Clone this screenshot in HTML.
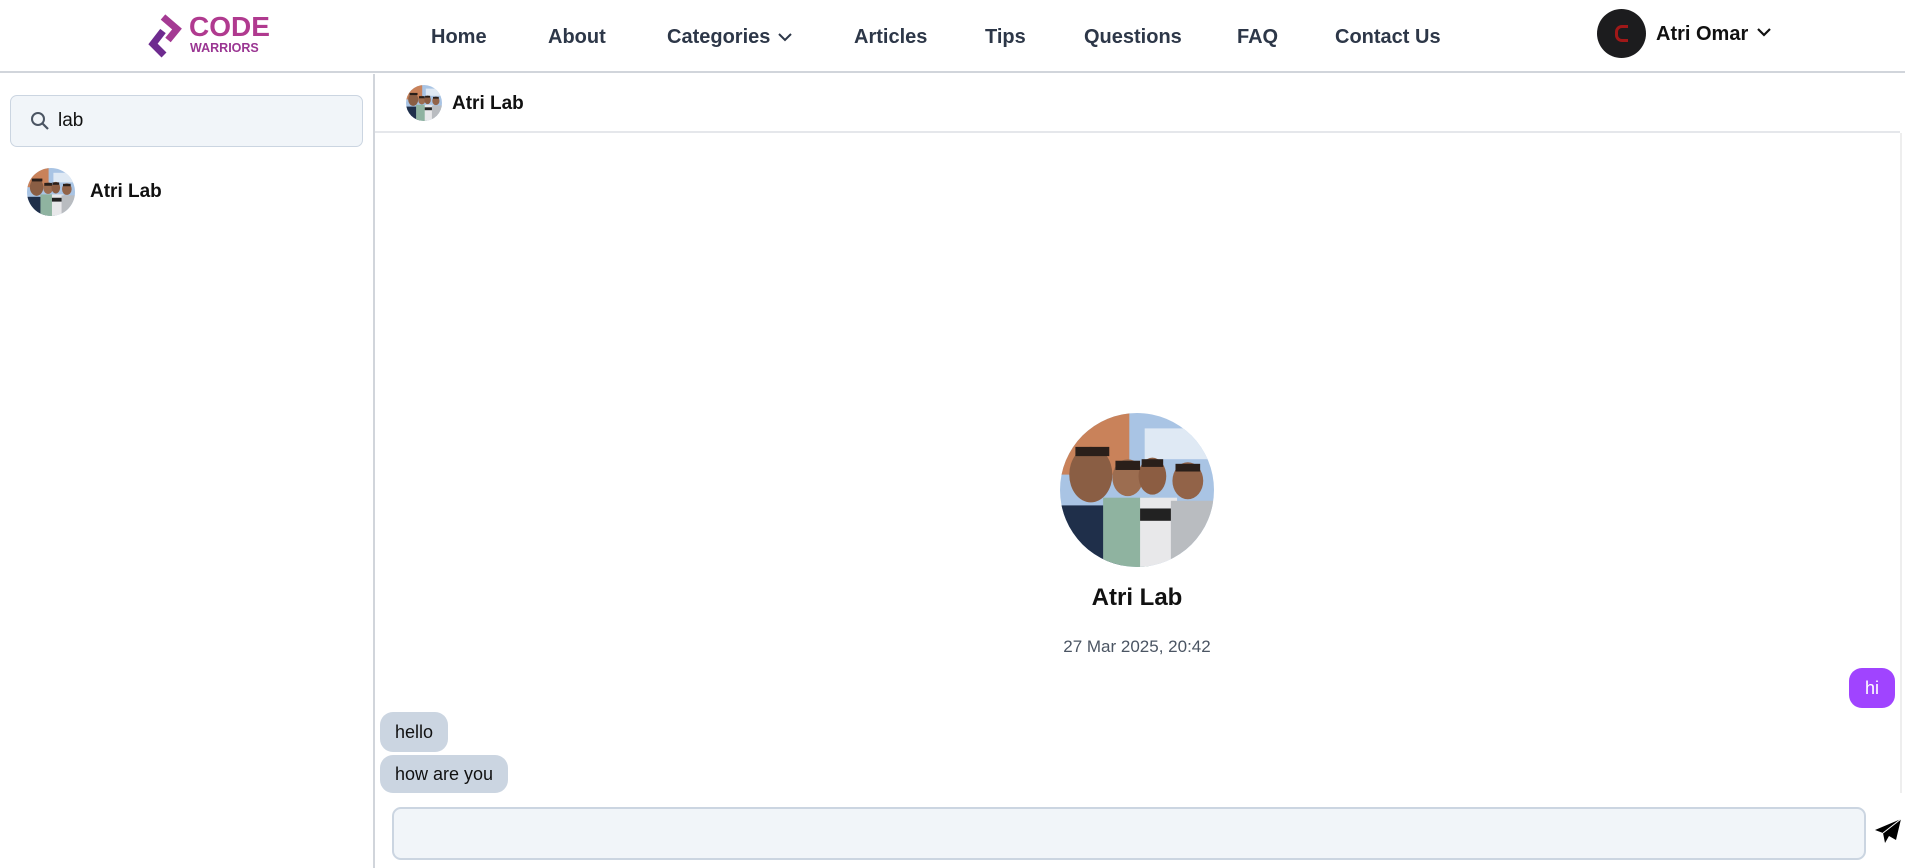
<!DOCTYPE html>
<html><head><meta charset="utf-8"><style>
*{box-sizing:border-box;margin:0;padding:0}
body{width:1905px;height:868px;overflow:hidden;background:#fff;font-family:"Liberation Sans",sans-serif;position:relative;color:#111}
.abs{position:absolute}
.nav{font-size:20px;font-weight:bold;color:#2d3748;top:26px}
.av{position:absolute;border-radius:50%;overflow:hidden}
.av svg{display:block;width:100%;height:100%}
.bub{position:absolute;border-radius:13px;font-size:18px;padding:0 15px;line-height:40px}
</style></head><body>
<div class="abs" style="left:0;top:0;width:1905px;height:73px;border-bottom:2px solid #d1d5db"></div>
<svg class="abs" style="left:146px;top:13px" width="42" height="46" viewBox="0 0 42 46">
<path d="M17 4 L31 16 L22 27" fill="none" stroke="#a43a93" stroke-width="7" stroke-linejoin="miter"/>
<path d="M17 18 L7 31 L18 42" fill="none" stroke="#6e2b8f" stroke-width="7" stroke-linejoin="miter"/>
</svg>
<div class="abs" style="left:189px;top:12px;font-size:28px;font-weight:bold;color:#b03a8f;line-height:30px">CODE</div>
<div class="abs" style="left:190px;top:41px;font-size:12.5px;font-weight:bold;color:#9a3592;line-height:14px">WARRIORS</div>
<div class="abs nav" style="left:431px">Home</div>
<div class="abs nav" style="left:548px">About</div>
<div class="abs nav" style="left:667px">Categories</div>
<svg class="abs" style="left:777px;top:32px" width="16" height="10" viewBox="0 0 16 10"><path d="M2 2 L8 8 L14 2" fill="none" stroke="#2d3748" stroke-width="2"/></svg>
<div class="abs nav" style="left:854px">Articles</div>
<div class="abs nav" style="left:985px">Tips</div>
<div class="abs nav" style="left:1084px">Questions</div>
<div class="abs nav" style="left:1237px">FAQ</div>
<div class="abs nav" style="left:1335px">Contact Us</div>
<div class="abs" style="left:1597px;top:9px;width:49px;height:49px;border-radius:50%;background:#1c1c1e"></div>
<div class="abs" style="left:1615px;top:25px;width:13px;height:17px;border:3px solid #a01818;border-right:none;border-radius:7px 0 0 7px"></div>
<div class="abs" style="left:1656px;top:23px;font-size:20px;font-weight:bold;color:#111">Atri Omar</div>
<svg class="abs" style="left:1756px;top:27px" width="16" height="10" viewBox="0 0 16 10"><path d="M2 2 L8 8 L14 2" fill="none" stroke="#111" stroke-width="2.2"/></svg>

<div class="abs" style="left:373px;top:74px;width:2px;height:794px;background:#d1d5db"></div>
<div class="abs" style="left:10px;top:95px;width:353px;height:52px;background:#f1f5f9;border:1px solid #cbd5e1;border-radius:7px"></div>
<svg class="abs" style="left:30px;top:111px" width="20" height="20" viewBox="0 0 20 20"><circle cx="8" cy="8" r="6" fill="none" stroke="#4b5563" stroke-width="2"/><path d="M12.5 12.5 L18 18" stroke="#4b5563" stroke-width="2.2"/></svg>
<div class="abs" style="left:58px;top:110px;font-size:19px;color:#111">lab</div>

<div class="av" style="left:27px;top:168px;width:48px;height:48px"><svg viewBox="0 0 100 100"><rect width="100" height="100" fill="#a9c4e4"/><rect x="0" y="0" width="45" height="40" fill="#c9825a"/><rect x="55" y="10" width="45" height="20" fill="#dfe9f4"/><rect x="-5" y="60" width="45" height="45" fill="#1f2f4a"/><rect x="28" y="55" width="30" height="50" fill="#8fb3a0"/><rect x="52" y="55" width="24" height="50" fill="#e8e8ea"/><rect x="52" y="62" width="24" height="8" fill="#222"/><rect x="72" y="57" width="30" height="50" fill="#b9bcc0"/><ellipse cx="20" cy="40" rx="14" ry="18" fill="#8a5e44"/><ellipse cx="44" cy="42" rx="10" ry="12" fill="#9c6d50"/><ellipse cx="60" cy="41" rx="9" ry="12" fill="#8c5d42"/><ellipse cx="83" cy="44" rx="10" ry="12" fill="#926348"/><rect x="10" y="22" width="22" height="6" fill="#2a1f1a"/><rect x="36" y="31" width="16" height="6" fill="#2a1f1a"/><rect x="53" y="30" width="14" height="5" fill="#2a1f1a"/><rect x="75" y="33" width="16" height="5" fill="#2a1f1a"/></svg></div>
<div class="abs" style="left:90px;top:181px;font-size:19px;font-weight:bold">Atri Lab</div>

<div class="abs" style="left:375px;top:131px;width:1525px;height:2px;background:#e5e7eb"></div>
<div class="av" style="left:406px;top:85px;width:36px;height:36px"><svg viewBox="0 0 100 100"><rect width="100" height="100" fill="#a9c4e4"/><rect x="0" y="0" width="45" height="40" fill="#c9825a"/><rect x="55" y="10" width="45" height="20" fill="#dfe9f4"/><rect x="-5" y="60" width="45" height="45" fill="#1f2f4a"/><rect x="28" y="55" width="30" height="50" fill="#8fb3a0"/><rect x="52" y="55" width="24" height="50" fill="#e8e8ea"/><rect x="52" y="62" width="24" height="8" fill="#222"/><rect x="72" y="57" width="30" height="50" fill="#b9bcc0"/><ellipse cx="20" cy="40" rx="14" ry="18" fill="#8a5e44"/><ellipse cx="44" cy="42" rx="10" ry="12" fill="#9c6d50"/><ellipse cx="60" cy="41" rx="9" ry="12" fill="#8c5d42"/><ellipse cx="83" cy="44" rx="10" ry="12" fill="#926348"/><rect x="10" y="22" width="22" height="6" fill="#2a1f1a"/><rect x="36" y="31" width="16" height="6" fill="#2a1f1a"/><rect x="53" y="30" width="14" height="5" fill="#2a1f1a"/><rect x="75" y="33" width="16" height="5" fill="#2a1f1a"/></svg></div>
<div class="abs" style="left:452px;top:93px;font-size:19px;font-weight:bold">Atri Lab</div>
<div class="abs" style="left:1900px;top:133px;width:2px;height:660px;background:#eee"></div>

<div class="av" style="left:1060px;top:413px;width:154px;height:154px"><svg viewBox="0 0 100 100"><rect width="100" height="100" fill="#a9c4e4"/><rect x="0" y="0" width="45" height="40" fill="#c9825a"/><rect x="55" y="10" width="45" height="20" fill="#dfe9f4"/><rect x="-5" y="60" width="45" height="45" fill="#1f2f4a"/><rect x="28" y="55" width="30" height="50" fill="#8fb3a0"/><rect x="52" y="55" width="24" height="50" fill="#e8e8ea"/><rect x="52" y="62" width="24" height="8" fill="#222"/><rect x="72" y="57" width="30" height="50" fill="#b9bcc0"/><ellipse cx="20" cy="40" rx="14" ry="18" fill="#8a5e44"/><ellipse cx="44" cy="42" rx="10" ry="12" fill="#9c6d50"/><ellipse cx="60" cy="41" rx="9" ry="12" fill="#8c5d42"/><ellipse cx="83" cy="44" rx="10" ry="12" fill="#926348"/><rect x="10" y="22" width="22" height="6" fill="#2a1f1a"/><rect x="36" y="31" width="16" height="6" fill="#2a1f1a"/><rect x="53" y="30" width="14" height="5" fill="#2a1f1a"/><rect x="75" y="33" width="16" height="5" fill="#2a1f1a"/></svg></div>
<div class="abs" style="left:937px;top:584px;width:400px;text-align:center;font-size:24px;font-weight:bold;color:#111">Atri Lab</div>
<div class="abs" style="left:937px;top:637px;width:400px;text-align:center;font-size:17px;color:#4b5563">27 Mar 2025, 20:42</div>
<div class="bub" style="left:1849px;top:668px;width:46px;height:40px;background:#a044ff;color:#fff;padding:0;text-align:center">hi</div>
<div class="bub" style="left:380px;top:712px;height:40px;background:#cbd5e1">hello</div>
<div class="bub" style="left:380px;top:755px;height:38px;line-height:38px;background:#cbd5e1">how are you</div>
<div class="abs" style="left:392px;top:807px;width:1474px;height:53px;background:#f1f5f9;border:2px solid #cbd5e1;border-radius:9px"></div>
<svg class="abs" style="left:1874px;top:818px" width="28" height="26" viewBox="0 0 28 26"><path d="M27 1 L1 12 L9 15 L11 25 L15 18 L22 22 Z" fill="#000"/><path d="M9 15 L27 1" stroke="#fff" stroke-width="1"/></svg>
</body></html>
